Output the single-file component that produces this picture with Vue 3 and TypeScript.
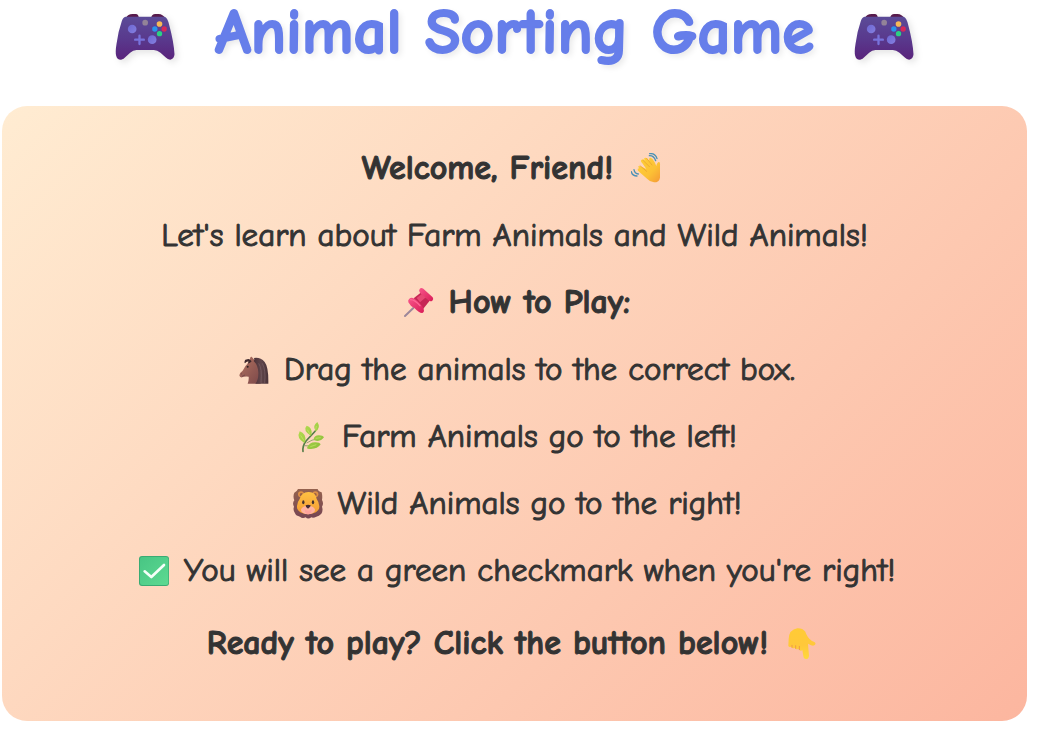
<script setup lang="ts">
type IconName = 'wave' | 'pin' | 'horse' | 'herb' | 'lion' | 'check' | 'point'
interface Line {
  text: string
  icon?: IconName
  trailing?: boolean
  strong?: boolean
  spaced?: boolean
}

const lines: Line[] = [
  { text: 'Welcome, Friend!', icon: 'wave', trailing: true, strong: true },
  { text: "Let's learn about Farm Animals and Wild Animals!" },
  { text: 'How to Play:', icon: 'pin', strong: true },
  { text: 'Drag the animals to the correct box.', icon: 'horse' },
  { text: 'Farm Animals go to the left!', icon: 'herb' },
  { text: 'Wild Animals go to the right!', icon: 'lion' },
  { text: "You will see a green checkmark when you're right!", icon: 'check' },
  { text: 'Ready to play? Click the button below!', icon: 'point', trailing: true, strong: true, spaced: true },
]

const viewBoxes: Record<IconName, string> = {
  wave: '33 25 96 96',
  pin: '33 20 96 96',
  horse: '26 24 96 96',
  herb: '22 22 96 96',
  lion: '34 25 96 96',
  check: '17 25 96 96',
  point: '20 22 96 96',
}
</script>

<template>
  <main class="page">
    <svg class="defs" width="0" height="0" aria-hidden="true">
      <defs>
        <linearGradient id="pad" x1="0" y1="0" x2="0" y2="1">
          <stop offset="0" stop-color="#5b4b98" /><stop offset="0.55" stop-color="#59388c" /><stop offset="1" stop-color="#5a237c" />
        </linearGradient>
        <linearGradient id="stick" x1="0" y1="0" x2="1" y2="1">
          <stop offset="0" stop-color="#6d66d2" /><stop offset="1" stop-color="#8480e0" />
        </linearGradient>
        <linearGradient id="skin" x1="0" y1="0" x2="1" y2="1">
          <stop offset="0" stop-color="#ffd039" /><stop offset="0.6" stop-color="#fcc135" /><stop offset="1" stop-color="#f59a35" />
        </linearGradient>
        <linearGradient id="skin-down" x1="0" y1="0" x2="0" y2="1">
          <stop offset="0" stop-color="#ffcb35" /><stop offset="0.55" stop-color="#ffc83a" /><stop offset="1" stop-color="#ffd83c" />
        </linearGradient>
        <linearGradient id="red" x1="0" y1="0" x2="1" y2="1">
          <stop offset="0" stop-color="#f8568b" /><stop offset="1" stop-color="#d91c57" />
        </linearGradient>
        <linearGradient id="coat" x1="0" y1="0" x2="1" y2="1">
          <stop offset="0" stop-color="#b37360" /><stop offset="1" stop-color="#7b4749" />
        </linearGradient>
        <linearGradient id="mane" x1="0" y1="0" x2="1" y2="0">
          <stop offset="0" stop-color="#4b3137" /><stop offset="0.5" stop-color="#61464b" /><stop offset="1" stop-color="#493238" />
        </linearGradient>
        <linearGradient id="leaf" x1="0" y1="0" x2="1" y2="1">
          <stop offset="0" stop-color="#b7df52" /><stop offset="1" stop-color="#8bbd39" />
        </linearGradient>
        <linearGradient id="lion-mane" x1="0" y1="0" x2="0" y2="1">
          <stop offset="0" stop-color="#95624e" /><stop offset="1" stop-color="#754453" />
        </linearGradient>
        <linearGradient id="lion-face" x1="0" y1="0" x2="0" y2="1">
          <stop offset="0" stop-color="#ffc142" /><stop offset="1" stop-color="#f49b35" />
        </linearGradient>
        <linearGradient id="green" x1="0" y1="0" x2="1" y2="1">
          <stop offset="0" stop-color="#48c584" /><stop offset="1" stop-color="#5dda91" />
        </linearGradient>
        <symbol id="gamepad" viewBox="45 42 177 138">
          <path d="M76 54Q82 42 96 42H106Q114 43 115 53ZM152 53Q154 42 164 42H174Q188 43 193 54Z" fill="#581b4c" />
          <path d="M75 50Q68 51 64 63Q53 94 48 132Q44 156 47 167Q50 180 62 179Q70 178 75 171L89 158Q98 150 108 150H160Q170 150 180 158L195 172Q202 179 209 179Q221 178 222 163Q220 126 206 74Q201 53 193 50Z" fill="url(#pad)" />
          <circle cx="95" cy="87" r="13" fill="url(#stick)" />
          <circle cx="155" cy="119" r="13" fill="url(#stick)" />
          <path d="M117 107V132M104 119H130" stroke="#7872db" stroke-width="7" stroke-linecap="round" />
          <circle cx="134" cy="68" r="8.5" fill="#928398" />
          <circle cx="177" cy="72" r="8.5" fill="#f8b956" />
          <circle cx="163" cy="87" r="8" fill="#2994ed" />
          <circle cx="191" cy="87" r="8" fill="#d62858" />
          <circle cx="177" cy="101" r="8" fill="#2bd184" />
        </symbol>
      </defs>
    </svg>

    <h1 class="title">
      <svg class="gamepad" aria-hidden="true"><use href="#gamepad" /></svg>
      <span>Animal Sorting Game</span>
      <svg class="gamepad" aria-hidden="true"><use href="#gamepad" /></svg>
    </h1>

    <section class="card">
      <p
        v-for="line in lines"
        :key="line.text"
        class="line"
        :class="{ trailing: line.trailing, strong: line.strong, spaced: line.spaced }"
      >
        <svg v-if="line.icon" class="icon" :viewBox="viewBoxes[line.icon]" fill="none" aria-hidden="true">
          <g v-if="line.icon === 'wave'" stroke-linecap="round" stroke-linejoin="round">
            <path d="M88 33Q101 32 107 48M89 27Q106 25 111 42" stroke="#4a91b5" stroke-width="4" />
            <path d="M34 81Q37 94 51 94M42 75Q44 87 55 88" stroke="#4a91b5" stroke-width="4" />
            <path d="M80 82Q65 78 58 71Q52 65 57 64Q63 64 79 73L67 56Q60 48 65 45Q71 42 77 49L72 42Q76 36 82 42L88 48Q86 39 91 39Q97 40 104 53L109 64Q111 53 117 52Q121 52 120 64V99Q118 113 102 113Q91 113 82 103L59 83Q51 77 53 72Q58 68 66 75Z" fill="url(#skin)" />
            <path d="M69 47L88 66M80 41L96 61M60 63L80 80" stroke="#e59b31" stroke-width="2" />
          </g>
          <g v-else-if="line.icon === 'pin'" stroke-linecap="round">
            <path d="M39 107L64 83" stroke="#9d879a" stroke-width="6" />
            <path d="M65 54L86 37L113 61L91 89Z" fill="#c62654" />
            <path d="M74 53L94 37L105 48L84 66Z" fill="#e64873" />
            <path d="M83 26Q87 20 94 25L122 51Q126 57 121 61Q115 66 109 59L84 37Q79 31 83 26Z" fill="url(#red)" />
            <path d="M52 55Q58 49 67 55Q87 68 94 84Q99 95 91 98Q82 99 68 84Q54 77 49 66Q47 59 52 55Z" fill="url(#red)" />
            <path d="M56 58Q68 58 84 76" stroke="#ff6896" stroke-width="4" />
          </g>
          <g v-else-if="line.icon === 'horse'">
            <path d="M62 45Q61 31 67 32L76 43Q90 49 92 71L94 113H55Q59 104 58 92Q44 91 38 94Q31 95 30 88Q31 80 40 74Q48 58 57 50Z" fill="url(#coat)" />
            <path d="M74 36Q93 33 106 48Q118 63 117 113H78Q88 101 87 79Q86 58 73 45Q76 42 74 36Z" fill="url(#mane)" />
            <path d="M66 45Q60 37 54 40Q46 40 46 45Q44 50 47 52Q52 45 58 47Q56 50 55 53Q63 52 67 46Z" fill="#3d272c" />
            <path d="M88 52Q99 67 95 110M99 52Q110 73 106 111" stroke="#7a6066" stroke-width="2" />
            <circle cx="55" cy="62" r="3" fill="#2e2022" />
            <path d="M35 84L38 83M38 91L47 87" stroke="#633c42" stroke-width="2" />
          </g>
          <g v-else-if="line.icon === 'herb'">
            <path d="M43 113Q41 97 52 82Q68 65 80 52" stroke="#557c48" stroke-width="5" stroke-linecap="round" />
            <path d="M54 88Q70 77 86 76M48 96Q65 97 77 98" stroke="#66894a" stroke-width="2" />
            <path d="M80 50Q71 36 86 25Q98 43 80 54ZM67 67Q41 49 54 36Q70 41 69 59ZM47 88Q22 74 33 53Q53 60 50 83ZM75 76Q78 64 91 65Q103 65 106 71Q94 87 76 79ZM55 103Q61 85 81 86Q93 86 96 92Q85 109 57 105Z" fill="url(#leaf)" />
            <path d="M83 37L81 48M56 48L64 61M36 65L46 81M81 74L96 72M65 99L83 93" stroke="#cce66d" stroke-width="2" />
          </g>
          <g v-else-if="line.icon === 'lion'">
            <path d="M52 28H111Q112 35 123 38Q126 50 124 61Q130 72 124 81Q128 93 122 102Q115 109 107 111Q98 116 92 113Q82 120 75 113Q65 118 58 111Q46 109 43 101Q36 91 40 81Q34 70 41 62Q36 50 41 39Q49 35 52 28Z" fill="url(#lion-mane)" />
            <circle cx="61" cy="44" r="9" fill="#df9046" /><circle cx="104" cy="44" r="9" fill="#df9046" />
            <circle cx="62" cy="45" r="5" fill="#9b6045" /><circle cx="103" cy="45" r="5" fill="#9b6045" />
            <path d="M83 37Q105 36 108 58Q114 65 116 80Q117 101 82 104Q47 101 49 79Q50 67 57 58Q62 38 83 37Z" fill="url(#lion-face)" />
            <ellipse cx="82" cy="91" rx="21" ry="13" fill="#ffb3a0" />
            <path d="M72 89Q82 97 93 89Q93 104 82 104Q71 103 72 89Z" fill="#ffa29c" />
            <ellipse cx="68" cy="68" rx="3.5" ry="6" fill="#44322f" /><ellipse cx="97" cy="68" rx="3.5" ry="6" fill="#44322f" />
            <path d="M75 77Q82 74 90 77Q91 81 82 87Q74 82 75 77Z" fill="#432b35" />
          </g>
          <g v-else-if="line.icon === 'check'">
            <rect x="20" y="28" width="90" height="90" rx="9" fill="#39ab73" />
            <rect x="23" y="31" width="85" height="84" rx="7" fill="url(#green)" />
            <path d="M37 74L57 91L95 55" stroke="#f5fff9" stroke-width="8" stroke-linecap="round" stroke-linejoin="round" />
          </g>
          <g v-else stroke-linecap="round" stroke-linejoin="round">
            <path d="M28 55Q29 27 54 23Q69 22 78 33Q83 50 98 61Q111 65 108 71Q105 77 95 74L86 69L89 105Q88 115 80 115Q73 115 72 106L69 88Q65 92 60 88L57 84Q53 88 49 84L46 81Q42 85 38 81L35 78Q29 81 27 75Z" fill="url(#skin-down)" />
            <path d="M38 74V80M49 75V83M60 77V87" stroke="#ef9b48" stroke-width="3" />
          </g>
        </svg>
        <strong v-if="line.strong">{{ line.text }}</strong>
        <span v-else>{{ line.text }}</span>
      </p>
    </section>
  </main>
</template>

<style>
body {
  background: #fff;
}
</style>

<style scoped>
.page {
  padding: 0 26px 12px 2px;
  color: #333;
  font-family: "Comic Sans MS", "Comic Neue", "Noto Sans", sans-serif;
  font-variant-ligatures: none;
}
.defs {
  position: absolute;
}
.title {
  display: flex;
  align-items: center;
  justify-content: center;
  gap: 40px;
  margin: 0 0 42px;
  color: #667eea;
  font-size: 65px;
  line-height: 64px;
  text-shadow: 3px 3px 6px rgba(0, 0, 0, 0.1);
  -webkit-text-stroke: 2px #667eea;
}
.gamepad {
  flex: none;
  width: 60px;
  height: 46px;
  margin-top: 10px;
  filter: drop-shadow(3px 3px 3px rgba(0, 0, 0, 0.1));
}
.card {
  padding: 39px 40px 54px;
  border-radius: 25px;
  background: linear-gradient(135deg, #ffecd2 0%, #fcb69f 100%);
}
.line {
  display: flex;
  align-items: center;
  justify-content: center;
  gap: 10px;
  margin: 0 0 20px;
  font-size: 33px;
  line-height: 47px;
  -webkit-text-stroke: 1px #333;
}
.strong {
  font-size: 34px;
}
.line:last-child {
  margin-bottom: 0;
}
.trailing {
  flex-direction: row-reverse;
  gap: 14px;
}
.spaced {
  margin-top: 26px;
}
.icon {
  flex: none;
  width: 32px;
  height: 32px;
  margin: 0 4px;
}
</style>
